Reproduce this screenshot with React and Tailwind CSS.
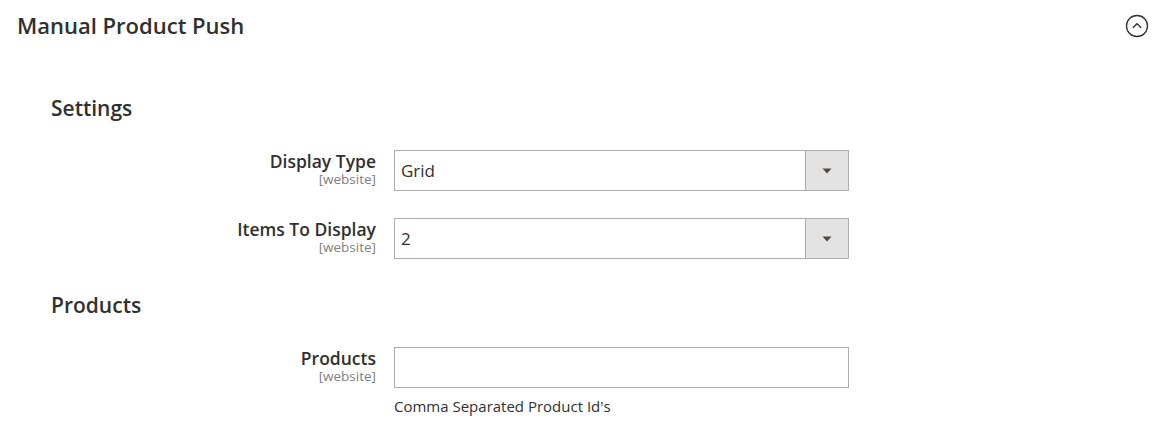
import React from "react";

const font = { fontFamily: '"Open Sans", "Noto Sans", sans-serif' };

function Arrow() {
  return (
    <svg width="10" height="6" viewBox="0 0 10 6">
      <path d="M0.5 0.5 L9.5 0.5 L5 5.5 Z" fill="#514943" />
    </svg>
  );
}

function Label({ title }) {
  return (
    <div className="w-[325px] shrink-0 text-right pt-[1px]">
      <div className="text-[17.5px] leading-[21px] font-semibold text-[#303030]">{title}</div>
      <div className="text-[13.5px] leading-[15px] text-[#808080]">[website]</div>
    </div>
  );
}

function Select({ value }) {
  return (
    <div className="flex w-[455px] h-[41px] border border-[#adadad] bg-white">
      <div className="flex-1 flex items-center pl-[6px] text-[17px] text-[#303030]">{value}</div>
      <div className="w-[43px] border-l border-[#adadad] bg-[#e3e3e3] flex items-center justify-center">
        <Arrow />
      </div>
    </div>
  );
}

export default function App() {
  return (
    <div className="w-[1166px] h-[427px] bg-white overflow-hidden" style={font}>
      <div className="flex items-start justify-between pl-[17px] pr-[17px] pt-[11px]">
        <h2 className="text-[22px] leading-[28px] font-semibold text-[#303030]">Manual Product Push</h2>
        <svg width="24" height="24" viewBox="0 0 24 24" className="mt-[3px]">
          <circle cx="12" cy="12" r="10.5" fill="none" stroke="#303030" strokeWidth="1.3" />
          <path d="M7.8 13.8 L12 9.8 L16.2 13.8" fill="none" stroke="#303030" strokeWidth="1.4" />
        </svg>
      </div>

      <div className="pl-[51px]">
        <h3 className="mt-[55px] text-[21px] leading-[28px] font-semibold text-[#303030]">Settings</h3>

        <div className="mt-[28px] flex gap-[18px]">
          <Label title="Display Type" />
          <Select value="Grid" />
        </div>
        <div className="mt-[27px] flex gap-[18px]">
          <Label title="Items To Display" />
          <Select value="2" />
        </div>

        <h3 className="mt-[32px] text-[21px] leading-[28px] font-semibold text-[#303030]">Products</h3>

        <div className="mt-[28px] flex gap-[18px]">
          <Label title="Products" />
          <div>
            <div className="w-[455px] h-[41px] border border-[#adadad] bg-white" />
            <div className="mt-[8px] text-[15px] leading-[20px] text-[#303030]">Comma Separated Product Id's</div>
          </div>
        </div>
      </div>
    </div>
  );
}
